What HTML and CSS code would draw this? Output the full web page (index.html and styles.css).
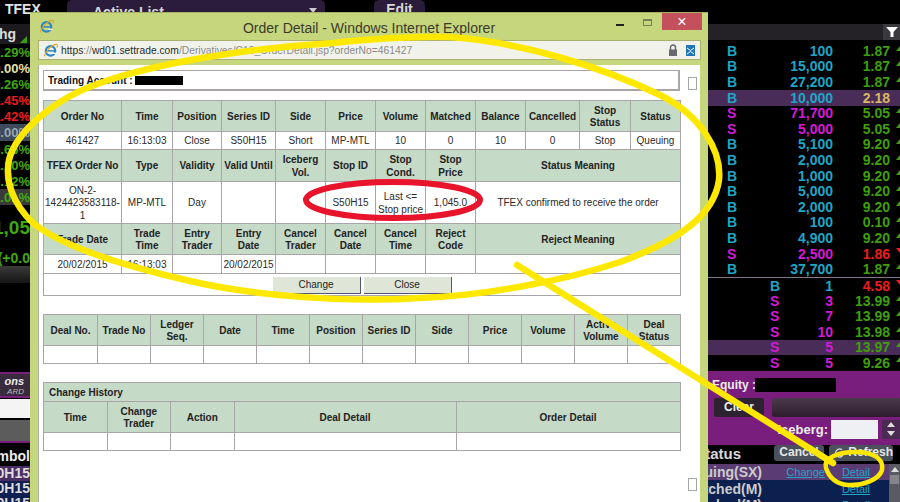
FILE: index.html
```html
<!DOCTYPE html>
<html lang="en">
<head>
<meta charset="utf-8">
<title>Order Detail</title>
<link rel="stylesheet" href="styles.css">
</head>
<body>
<div class="screen">
  <aside class="left">
    <div class="l-top">TFEX</div>
    <div class="l-head"><span class="clip">Chg</span><i class="corner"></i></div>
    <div class="l-row up">1.29%</div>
    <div class="l-row flat">0.00%</div>
    <div class="l-row up">0.26%</div>
    <div class="l-row down">1.45%</div>
    <div class="l-row down">1.42%</div>
    <div class="l-row flat hl">0.00%</div>
    <div class="l-row up">0.65%</div>
    <div class="l-row up">1.10%</div>
    <div class="l-row up">0.12%</div>
    <div class="l-row up hl2">1.01%</div>
    <div class="l-big">1,05</div>
    <div class="l-sub">(+0.0</div>
    <div class="l-band"></div>
    <div class="l-fill"></div>
    <div class="l-logo"><b>ons</b><span>ARD</span></div>
    <div class="l-white"></div>
    <div class="l-gray"></div>
    <div class="l-symbol">Symbol</div>
    <div class="l-sym s1">S50H15</div>
    <div class="l-sym s2">S50H15</div>
    <div class="l-sym s2">S50H15</div>
  </aside>

  <div class="middle">
    <div class="pill active">Active List<span class="caret"></span></div>
    <div class="pill edit">Edit</div>
  </div>

  <aside class="right">
    <div class="r-gap"></div>
    <div class="r-head"><span class="filter"><svg width="14" height="12" viewBox="0 0 14 12"><path class="white-fill" d="M1 1h12L8.5 6v5h-3V6z"/></svg></span></div>
    <div class="r-pad"></div>
    <div class="tick"><span class="buy">B</span><span class="buy q">100</span><span class="g p">1.87</span><i class="tri-up"></i></div>
    <div class="tick"><span class="buy">B</span><span class="buy q">15,000</span><span class="g p">1.87</span><i class="tri-up"></i></div>
    <div class="tick"><span class="buy">B</span><span class="buy q">27,200</span><span class="g p">1.87</span><i class="tri-up"></i></div>
    <div class="tick hl-row"><span class="buy">B</span><span class="buy q">10,000</span><span class="tan p">2.18</span></div>
    <div class="tick"><span class="sell">S</span><span class="sell q">71,700</span><span class="g p">5.05</span><i class="tri-up"></i></div>
    <div class="tick"><span class="sell">S</span><span class="sell q">5,000</span><span class="g p">5.05</span><i class="tri-up"></i></div>
    <div class="tick"><span class="buy">B</span><span class="buy q">5,100</span><span class="g p">9.20</span><i class="tri-up"></i></div>
    <div class="tick"><span class="buy">B</span><span class="buy q">2,000</span><span class="g p">9.20</span><i class="tri-up"></i></div>
    <div class="tick"><span class="buy">B</span><span class="buy q">1,000</span><span class="g p">9.20</span><i class="tri-up"></i></div>
    <div class="tick"><span class="buy">B</span><span class="buy q">5,000</span><span class="g p">9.20</span><i class="tri-up"></i></div>
    <div class="tick"><span class="buy">B</span><span class="buy q">2,000</span><span class="g p">9.20</span><i class="tri-up"></i></div>
    <div class="tick"><span class="buy">B</span><span class="buy q">100</span><span class="g p">0.10</span><i class="tri-up"></i></div>
    <div class="tick"><span class="buy">B</span><span class="buy q">4,900</span><span class="g p">9.20</span><i class="tri-up"></i></div>
    <div class="tick"><span class="sell">S</span><span class="sell q">2,500</span><span class="r p">1.86</span><i class="tri-down"></i></div>
    <div class="tick"><span class="buy">B</span><span class="buy q">37,700</span><span class="g p">1.87</span><i class="tri-up"></i></div>
    <div class="r-divider"></div>
    <div class="tick t2"><span class="buy">B</span><span class="buy q">1</span><span class="r p">4.58</span><i class="tri-down"></i></div>
    <div class="tick t2"><span class="sell">S</span><span class="sell q">3</span><span class="g p">13.99</span><i class="tri-up"></i></div>
    <div class="tick t2"><span class="sell">S</span><span class="sell q">7</span><span class="g p">13.99</span><i class="tri-up"></i></div>
    <div class="tick t2"><span class="sell">S</span><span class="sell q">10</span><span class="g p">13.98</span><i class="tri-up"></i></div>
    <div class="tick t2 hl-row"><span class="sell">S</span><span class="sell q">5</span><span class="g p">13.97</span><i class="tri-up"></i></div>
    <div class="tick t2"><span class="sell">S</span><span class="sell q">5</span><span class="g p">9.26</span><i class="tri-up"></i></div>

    <div class="panel">
      <div class="p-equity"><span class="eq-label">Equity :</span><i class="black-box"></i></div>
      <div class="p-actions"><span class="clear-btn">Clear</span><span class="send-bar"></span></div>
      <div class="p-iceberg"><span>Iceberg:</span><i class="ice-input"></i><span class="spin"><i class="sp-up"></i><i class="sp-down"></i></span></div>
    </div>

    <div class="s-head"><span class="s-title">Status</span><span class="s-btn cancel">Cancel</span><span class="s-btn refresh"><svg width="14" height="14" viewBox="0 0 14 14"><path class="refresh-ico" d="M2 7a5 5 0 0 1 8-4M12 7a5 5 0 0 1-8 4"/></svg>Refresh</span></div>
    <div class="s-body">
      <div class="s-rows">
        <div class="s-row sr1"><span class="s-name">Queuing(SX)</span><a class="lnk chg">Change</a><a class="lnk">Detail</a></div>
        <div class="s-row sr2"><span class="s-name">Matched(M)</span><a class="lnk">Detail</a></div>
        <div class="s-row sr2"><span class="s-name">Matched(M)</span><a class="lnk">Detail</a></div>
      </div>
      <div class="s-scroll"><i class="sp-up"></i><i class="thumb"></i></div>
    </div>
  </aside>

  <section class="window">
    <header class="titlebar">
      <svg class="ie" width="15" height="15" viewBox="0 0 16 16"><use href="#ie-logo"/></svg>
      <span class="title">Order Detail - Windows Internet Explorer</span>
      <div class="win-btns">
        <span class="w-min"></span>
        <span class="w-max"></span>
        <span class="w-close">×</span>
      </div>
    </header>
    <div class="address">
      <svg class="ie" width="15" height="15" viewBox="0 0 16 16">
        <g id="ie-logo">
          <circle class="ie-ring" cx="8" cy="8.4" r="5"/>
          <path class="ie-bar" d="M4 8.4h8"/>
          <path class="ie-cut" d="M10 10.2h4v1.6h-4z"/>
          <path class="ie-orbit" d="M2.5 13.5C.5 15 2 11 5 7.5S12 1.5 14.5 1.5c1.5 0 1 2 .2 3.3"/>
        </g>
      </svg>
      <span class="url"><b>https</b>://<b>wd01.settrade.com</b>/Derivatives/C13_OrderDetail.jsp?orderNo=461427</span>
      <svg class="lock" width="10" height="12" viewBox="0 0 10 12"><path class="lock-arc" d="M2.5 6V3.5a2.5 2.5 0 0 1 5 0V6"/><path class="lock-body" d="M1 5.5h8V12H1z"/></svg>
      <svg class="compat" width="9" height="11" viewBox="0 0 9 11"><path class="compat-b" d="M0 0h9v11H0z"/><path class="compat-w" d="M1 3l3.5 2.5L8 3M1 9l3.5-2.5L8 9"/></svg>
    </div>
    <main class="content">
      <div class="scroll-top"></div>
      <div class="scroll-bot"></div>
      <div class="account"><b>Trading Account :</b><i class="redact"></i></div>

      <table class="grid t-order">
        <colgroup><col class="o1"><col class="o2"><col class="o3"><col class="o4"><col class="o5"><col class="o5"><col class="o5"><col class="o5"><col class="o5"><col class="o6"><col class="o7"><col class="o5"></colgroup>
        <tr class="h31"><th>Order No</th><th>Time</th><th>Position</th><th>Series ID</th><th>Side</th><th>Price</th><th>Volume</th><th>Matched</th><th>Balance</th><th>Cancelled</th><th>Stop<br>Status</th><th>Status</th></tr>
        <tr class="h18"><td>461427</td><td>16:13:03</td><td>Close</td><td>S50H15</td><td>Short</td><td>MP-MTL</td><td>10</td><td>0</td><td>10</td><td>0</td><td>Stop</td><td>Queuing</td></tr>
        <tr class="h32"><th>TFEX Order No</th><th>Type</th><th>Validity</th><th>Valid Until</th><th>Iceberg<br>Vol.</th><th>Stop ID</th><th>Stop<br>Cond.</th><th>Stop<br>Price</th><th colspan="4">Status Meaning</th></tr>
        <tr class="h42"><td>ON-2-<br>1424423583118-<br>1</td><td>MP-MTL</td><td>Day</td><td></td><td></td><td>S50H15</td><td>Last &lt;=<br>Stop price</td><td>1,045.0</td><td colspan="4">TFEX confirmed to receive the order</td></tr>
        <tr class="h31"><th>Trade Date</th><th>Trade<br>Time</th><th>Entry<br>Trader</th><th>Entry<br>Date</th><th>Cancel<br>Trader</th><th>Cancel<br>Date</th><th>Cancel<br>Time</th><th>Reject<br>Code</th><th colspan="4">Reject Meaning</th></tr>
        <tr class="h19"><td>20/02/2015</td><td>16:13:03</td><td></td><td>20/02/2015</td><td></td><td></td><td></td><td></td><td colspan="4"></td></tr>
        <tr class="h22"><td colspan="12"><div class="btns"><button class="btn">Change</button><button class="btn">Close</button></div></td></tr>
      </table>

      <table class="grid t-deal">
        <colgroup><col class="d1"><col class="d2"><col class="d2"><col class="d2"><col class="d2"><col class="d2"><col class="d2"><col class="d2"><col class="d2"><col class="d2"><col class="d2"><col class="d2"></colgroup>
        <tr class="h31"><th>Deal No.</th><th>Trade No</th><th>Ledger<br>Seq.</th><th>Date</th><th>Time</th><th>Position</th><th>Series ID</th><th>Side</th><th>Price</th><th>Volume</th><th>Active<br>Volume</th><th>Deal<br>Status</th></tr>
        <tr class="h18"><td></td><td></td><td></td><td></td><td></td><td></td><td></td><td></td><td></td><td></td><td></td><td></td></tr>
      </table>

      <table class="grid t-hist">
        <colgroup><col class="c1"><col class="c1"><col class="c1"><col class="c2"><col class="c3"></colgroup>
        <tr class="h19"><th colspan="5" class="caption-cell">Change History</th></tr>
        <tr class="h31"><th>Time</th><th>Change<br>Trader</th><th>Action</th><th>Deal Detail</th><th>Order Detail</th></tr>
        <tr class="h18"><td></td><td></td><td></td><td></td><td></td></tr>
      </table>
    </main>
  </section>

  <svg class="marks" width="900" height="502" viewBox="0 0 900 502">
    <path class="yellow thick" d="M450 37C520 42 600 66 660 95C700 115 722 150 719 180C714 215 680 240 620 262C560 282 480 296 420 298C340 303 250 295 190 281C120 265 60 245 33 223C12 203 5 180 9 160C15 135 50 100 100 83C160 62 250 48 333 43C380 38 420 36 450 37Z"/>
    <path class="yellow thick" d="M517 265L833 463"/>
    <path class="yellow arrow" d="M826 468C823 458 838 452 856 452C875 452 884 460 882 470C879 480 862 486 848 485C836 484 829 477 826 468Z"/>
    <ellipse class="red" cx="393" cy="200" rx="87" ry="18"/>
  </svg>
</div>
</body>
</html>
```
FILE: styles.css
```css
* { box-sizing: border-box; }
html, body { margin: 0; padding: 0; background: #000; }
.screen {
  position: relative;
  display: flex;
  width: 900px;
  height: 502px;
  overflow: hidden;
  background: #000;
  font-family: "Liberation Sans", Arial, sans-serif;
}

/* Left trading column, mostly hidden behind the popup */
.left { display: flex; flex-direction: column; width: 40px; flex: none; color: #fff; font-weight: 700; }
.left > * { flex: none; }
.l-top { height: 24px; padding: 2px 0 0 5px; font-size: 14px; line-height: 15px; color: #e4e4e4; white-space: nowrap; }
.l-head { position: relative; display: flex; justify-content: flex-end; height: 20px; width: 30px; overflow: hidden; padding-right: 1px; font-size: 14px; line-height: 20px; color: #ddd; background: #1c1a1e; }
.clip { margin-right: 13px; }
.corner { position: absolute; right: 3px; top: 12px; border-style: solid; border-width: 0 0 7px 7px; border-color: transparent transparent #3f9f0a transparent; }
.l-row { display: flex; justify-content: flex-end; width: 30px; height: 16.1px; overflow: hidden; font-size: 13px; line-height: 17px; white-space: nowrap; }
.up { color: #3fa80e; }
.down { color: #ee1c1c; }
.flat { color: #e8e0a8; }
.hl { background: #3c4a5c; color: #9aa8b0; }
.hl2 { background: #3a3a3a; }
.l-big { display: flex; justify-content: flex-end; width: 30px; height: 34px; margin-top: 11px; overflow: hidden; font-size: 19px; line-height: 24px; color: #3fa80e; }
.l-sub { display: flex; justify-content: flex-end; width: 30px; height: 16px; overflow: hidden; font-size: 14px; line-height: 16px; color: #3fa80e; }
.l-band { width: 30px; height: 17px; background: linear-gradient(#3a3a3a, #161616); }
.l-fill { height: 89px; }
.l-logo { display: flex; flex-direction: column; align-items: flex-end; width: 30px; height: 26px; padding: 2px 6px 0 0; border: 2px solid #7a1e7e; border-width: 2px 0; background: #3a2a3e; font-style: italic; }
.l-logo b { font-size: 11px; line-height: 11px; color: #eee; }
.l-logo span { font-size: 8px; line-height: 9px; font-weight: 400; color: #bbb; }
.l-white { width: 30px; height: 19px; margin-top: 1px; background: #f4f4f4; }
.l-gray { width: 30px; height: 23px; margin-top: 2px; background: #5c5c5c; border-bottom: 2px solid #7a1e7e; }
.l-symbol { display: flex; justify-content: flex-end; width: 30px; height: 23px; overflow: hidden; font-size: 14px; line-height: 26px; color: #eee; }
.l-sym { display: flex; justify-content: flex-end; width: 30px; height: 15px; overflow: hidden; font-size: 14px; line-height: 15px; color: #ddd; }
.s1 { background: #4a2d62; }
.s2 { background: #0e1f50; }

/* Top strip */
.middle { flex: 1; display: flex; align-items: flex-start; gap: 49px; padding-left: 27px; }
.pill { position: relative; height: 24px; font-size: 14px; font-weight: 700; line-height: 18px; color: #d8d8d8; background: #2a1c3a; border-radius: 5px; text-align: center; }
.active { width: 258px; padding: 0 0 0 26px; line-height: 24px; text-align: left; }
.caret { position: absolute; right: 8px; top: 8px; border-style: solid; border-width: 5px 4px 0; border-color: #ccc transparent transparent; }
.edit { width: 51px; }

/* Right trading column */
.right { display: flex; flex-direction: column; width: 192px; flex: none; }
.right > * { flex: none; }
.r-gap { height: 24px; }
.r-head { display: flex; justify-content: flex-end; height: 16px; background: #242226; }
.filter { display: flex; align-items: center; justify-content: center; width: 17px; height: 16px; background: #3a3a3e; }
.white-fill { fill: #fff; }
.r-pad { height: 3.5px; }
.tick { display: grid; grid-template-columns: 14px 92px 57px 10px; align-items: center; height: 15.6px; padding-left: 19px; font-size: 14px; font-weight: 700; line-height: 15px; overflow: hidden; }
.t2 { grid-template-columns: 14px 49px 57px 10px; padding-left: 62px; height: 15.4px; }
.q, .p { text-align: right; }
.buy { color: #1ea6c6; }
.sell { color: #d41ad6; }
.g { color: #3f9f0a; }
.r { color: #ee1c1c; }
.tan { color: #d8b860; }
.hl-row { background: #4a2c58; }
.tri-up, .tri-down { align-self: start; margin: 2px 0 0 6px; width: 0; height: 0; border-style: solid; }
.tri-up { border-width: 0 4px 5px; border-color: transparent transparent #3f9f0a; }
.tri-down { border-width: 5px 4px 0; border-color: #ee1c1c transparent transparent; }
.r-divider { height: 1px; background: #84748c; }

.panel { display: flex; flex-direction: column; height: 74px; padding: 7px 0 0 4px; background: #7a1e7e; color: #eee; font-size: 13px; font-weight: 700; }
.p-equity { display: flex; align-items: center; height: 14px; }
.eq-label { width: 43px; white-space: nowrap; font-size: 12px; }
.black-box { width: 81px; height: 14px; background: #000; }
.p-actions { display: flex; gap: 8px; margin-top: 6px; height: 19px; }
.clear-btn { width: 50px; margin-left: 2px; background: #2c2230; line-height: 18px; text-align: center; font-size: 12px; border-radius: 2px; }
.send-bar { flex: 1; background: linear-gradient(#4a3a4c, #2c1c2e); border-radius: 3px 0 0 3px; }
.p-iceberg { display: flex; justify-content: flex-end; align-items: center; height: 19px; margin-top: 3px; gap: 3px; }
.ice-input { width: 47px; height: 19px; background: #eef0f4; }
.spin { display: flex; flex-direction: column; justify-content: center; align-items: center; gap: 4px; width: 18px; height: 19px; margin-left: 1px; background: #4a2a50; }
.sp-up { width: 0; border-style: solid; border-width: 0 4px 5px; border-color: transparent transparent #ddd; }
.sp-down { width: 0; border-style: solid; border-width: 5px 4px 0; border-color: #ddd transparent transparent; }

.s-head { display: flex; align-items: flex-start; height: 19px; overflow: hidden; }
.s-title { display: flex; justify-content: flex-end; width: 33px; margin-right: 33px; font-size: 15px; font-weight: 700; line-height: 17px; color: #d8d8d8; overflow: hidden; }
.s-btn { height: 16px; font-size: 12px; font-weight: 700; line-height: 15px; color: #e6e6e6; text-align: center; background: #4a505c; border-radius: 3px; }
.cancel { width: 50px; }
.refresh { display: flex; align-items: center; gap: 3px; width: 64px; margin-left: 5px; padding-left: 5px; }
.refresh-ico { fill: none; stroke: #ddd; stroke-width: 1.5; }
.s-body { display: flex; height: 38px; }
.s-rows { width: 181px; }
.s-row { display: flex; align-items: center; height: 16.5px; padding-right: 19px; font-size: 14px; font-weight: 700; color: #ccc; overflow: hidden; }
.sr1 { background: #5a3c72; }
.sr2 { background: #0c2050; }
.s-name { display: flex; justify-content: flex-end; width: 54px; margin-right: auto; overflow: hidden; white-space: nowrap; }
.lnk { font-size: 11px; font-weight: 400; line-height: 12px; color: #1ea6c6; text-decoration: underline; }
.chg { margin-right: 17px; }
.s-scroll { display: flex; flex-direction: column; align-items: center; gap: 3px; width: 11px; padding-top: 3px; background: #5a5a62; }
.thumb { width: 9px; height: 9px; background: #88848c; }

/* Popup window */
.window {
  position: absolute;
  left: 30px;
  top: 12px;
  display: flex;
  flex-direction: column;
  width: 678px;
  height: 490px;
  background: #c6d67c;
  border-top: 1px solid #a8b062;
}
.titlebar { position: relative; display: flex; align-items: center; justify-content: center; height: 27px; flex: none; }
.titlebar .ie { position: absolute; left: 9px; top: 6px; }
.title { font-size: 14px; color: #3c3a2c; white-space: nowrap; position: relative; top: 1px; }
.win-btns { position: absolute; right: 6px; top: 0; display: flex; align-items: flex-start; }
.w-min { width: 8px; height: 2px; margin: 11px 19px 0 0; background: #222; }
.w-max { width: 9px; height: 7px; margin: 6px 10px 0 0; border: 1px solid #77805a; border-top-width: 2px; }
.w-close { width: 40px; height: 17px; background: #c4505c; color: #fff; font-size: 16px; line-height: 17px; text-align: center; }
.address { display: flex; align-items: center; height: 20px; margin: 0 7px 0 8px; padding: 0 4px; flex: none; background: #f1f3ea; border: 1px solid #aab070; }
.url { margin-left: 3px; font-size: 10.3px; color: #8a8a8a; white-space: nowrap; }
.url b { font-weight: 400; color: #2a2a2a; }
.lock { margin-left: auto; }
.lock-arc { fill: none; stroke: #6a6a70; stroke-width: 1.5; }
.lock-body { fill: #6a6a70; }
.compat { margin: 0 1px 0 8px; }
.compat-b { fill: #2274b8; }
.compat-w { fill: none; stroke: #fff; stroke-width: 1; }
.ie-ring { fill: none; stroke: #2a86c8; stroke-width: 2.4; }
.ie-bar { stroke: #2a86c8; stroke-width: 1.6; }
.ie-cut { fill: #f0f2e4; }
.ie-orbit { fill: none; stroke: #e0a820; stroke-width: 1.2; }

.content { position: relative; flex: 1; margin: 5px 8px 0 8px; padding: 5px 20px 0 4px; background: #fff; border-left: 1px solid #a8b0a0; display: flex; flex-direction: column; }
.scroll-top, .scroll-bot { position: absolute; right: 3px; width: 9px; height: 13px; border: 1px solid #a0a8a0; background: #fff; }
.scroll-top { top: 12px; }
.scroll-bot { top: 413px; }
.account { display: flex; align-items: center; height: 21px; flex: none; width: 637px; padding-left: 4px; border: 1px solid #a8a4a8; border-width: 1px 2px 2px 1px; font-size: 10px; color: #111; }
.redact { width: 48px; height: 9px; margin-left: 2px; background: #000; }

.grid { width: 637px; flex: none; table-layout: fixed; border-collapse: collapse; font-size: 10px; line-height: 12.5px; color: #1c1c1c; }
.t-order { margin-top: 9px; }
.t-deal, .t-hist { margin-top: 18px; }
.grid th, .grid td { padding: 2px 0 0; text-align: center; vertical-align: middle; border: 1px solid #a8a4a8; overflow: hidden; }
.grid th { background: #c6dac8; font-weight: 700; color: #222; }
.grid td { background: #fff; font-weight: 400; color: #2a2a2a; }
.grid th.caption-cell { padding-left: 5px; text-align: left; }
.h18 { height: 18px; }
.h19 { height: 19px; }
.h22 { height: 22px; }
.h31 { height: 31px; }
.h32 { height: 32px; }
.h42 { height: 42px; }
.o1 { width: 78px; }
.o2 { width: 51px; }
.o3 { width: 49px; }
.o4 { width: 54px; }
.o5 { width: 50px; }
.o6 { width: 54px; }
.o7 { width: 51px; }
.d1 { width: 54px; }
.d2 { width: 53px; }
.c1 { width: 63.5px; }
.c2 { width: 222px; }
.c3 { width: 224px; }
.btns { display: flex; justify-content: center; gap: 3px; }
.btn { width: 88px; height: 17px; padding: 0; font: inherit; color: #222; background: #dfe6d8; border: 0; border-right: 1px solid #55557a; border-bottom: 1px solid #55557a; }

/* Hand-drawn annotations */
.marks { position: absolute; left: 0; top: 0; pointer-events: none; }
.yellow { fill: none; stroke: #ffe800; stroke-linecap: round; }
.thick { stroke-width: 6.5; }
.arrow { stroke-width: 4.5; }
.red { fill: none; stroke: #e8142c; stroke-width: 6; }
```
